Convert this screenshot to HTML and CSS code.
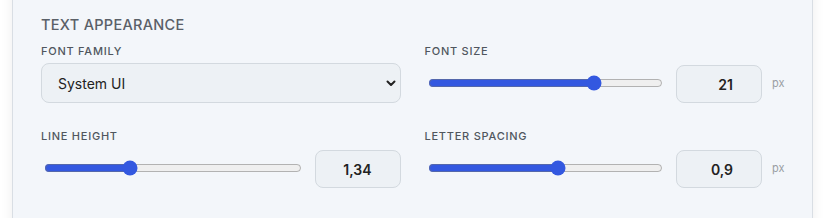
FILE: index.html
```html
<!DOCTYPE html>
<html>
<head>
    <title>Text Appearance</title>
    <link rel="stylesheet" href="styles.css">
</head>
<body>
    <div class="panel">
        <h3 class="section-title">Text Appearance</h3>

        <div class="settings-grid">
            <div class="field">
                <label class="field-label">Font Family</label>
                <div class="select-wrap">
                    <select class="font-select">
                        <option>System UI</option>
                        <option>Inter</option>
                        <option>Roboto</option>
                    </select>
                    <svg class="chevron" width="10" height="7" viewBox="0 0 10 7">
                        <path d="M1.5 1.5 L5 5 L8.5 1.5" fill="none" stroke="#222" stroke-width="2" stroke-linecap="round" stroke-linejoin="round"/>
                    </svg>
                </div>
            </div>

            <div class="field">
                <label class="field-label">Font Size</label>
                <div class="control-row">
                    <input type="range" class="slider" min="8" max="26" step="1" value="21">
                    <input type="text" class="value-box" value="21">
                    <span class="unit">px</span>
                </div>
            </div>

            <div class="field">
                <label class="field-label">Line Height</label>
                <div class="control-row">
                    <input type="range" class="slider" min="1" max="2.05" step="0.01" value="1.34">
                    <input type="text" class="value-box" value="1,34">
                </div>
            </div>

            <div class="field">
                <label class="field-label">Letter Spacing</label>
                <div class="control-row">
                    <input type="range" class="slider" min="-1" max="2.4" step="0.1" value="0.9">
                    <input type="text" class="value-box" value="0,9">
                    <span class="unit">px</span>
                </div>
            </div>
        </div>
    </div>
</body>
</html>
```

FILE: styles.css
```css
body {
    margin: 0;
    background-color: #ffffff;
    font-family: Inter, "Noto Sans", sans-serif;
    color: #222;
}

.panel {
    margin: -10px 12px 0;
    padding: 24px 28px 40px;
    background-color: #f3f6fa;
    border: 1px solid #d9dee4;
    box-shadow: 0 0 12px rgba(0, 0, 0, 0.07);
    min-height: 240px;
}

.section-title {
    margin: 0 0 9px;
    font-size: 14.5px;
    line-height: 20px;
    font-weight: 500;
    letter-spacing: 0.3px;
    text-transform: uppercase;
    color: #5a6068;
}

.settings-grid {
    display: grid;
    grid-template-columns: 1fr 1fr;
    column-gap: 24px;
    row-gap: 26px;
}

.field-label {
    display: block;
    margin-bottom: 5px;
    font-size: 11px;
    line-height: 14px;
    font-weight: 500;
    letter-spacing: 0.75px;
    text-transform: uppercase;
    color: #50565e;
}

.select-wrap {
    position: relative;
}

.font-select {
    appearance: none;
    width: 100%;
    height: 40px;
    margin: 0;
    padding: 0 16px;
    font-family: inherit;
    font-size: 14px;
    color: #222;
    background-color: #edf1f5;
    border: 1px solid #d3d9df;
    border-radius: 8px;
}

.chevron {
    position: absolute;
    right: 5px;
    top: 17px;
}

.control-row {
    display: flex;
    align-items: center;
    height: 40px;
}

.slider {
    flex: 1;
    min-width: 0;
    margin: 0 13px 0 3px;
    accent-color: #3358e0;
}

.value-box {
    align-self: flex-end;
    box-sizing: border-box;
    width: 86px;
    height: 38px;
    margin: 0;
    padding: 0 28px 0 8px;
    font-family: inherit;
    font-size: 14px;
    font-weight: 600;
    color: #222;
    text-align: right;
    background-color: #edf1f5;
    border: 1px solid #d3d9df;
    border-radius: 8px;
}

.unit {
    margin-left: 10px;
    width: 12px;
    font-size: 11px;
    color: #9a9ea4;
}
```
